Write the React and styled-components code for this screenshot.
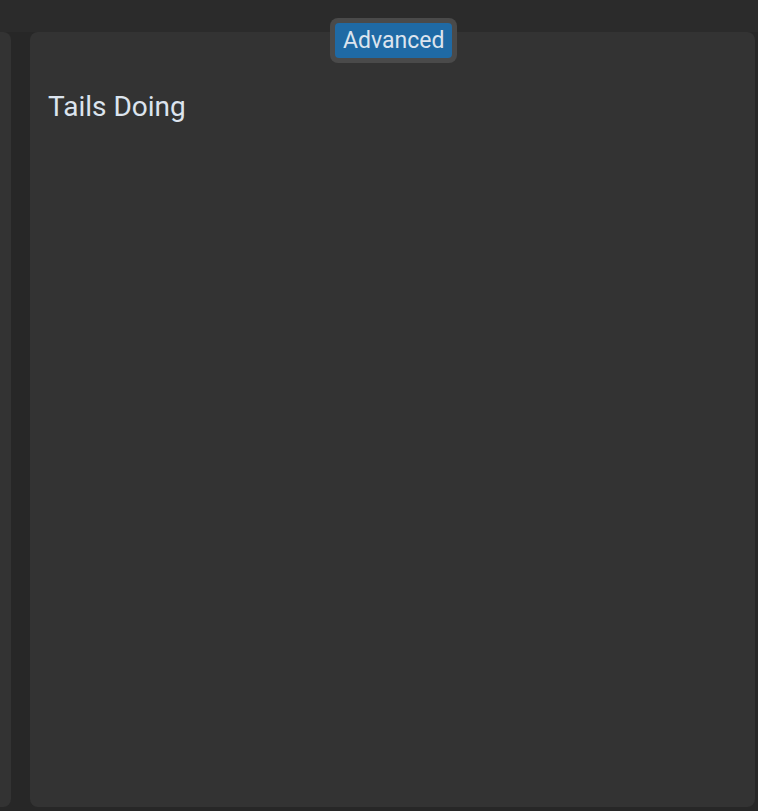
import React from 'react';
import styled, { createGlobalStyle } from 'styled-components';

const GlobalStyle = createGlobalStyle`
  html, body {
    margin: 0;
    padding: 0;
    background: #2b2b2b;
    font-family: Roboto, "Liberation Sans", sans-serif;
  }
  #root {
    height: 811px;
  }
`;

const Window = styled.div`
  position: relative;
  height: 811px;
  padding-top: 32px;
  box-sizing: border-box;
  display: flex;
  flex-direction: column;
`;

const Body = styled.div`
  flex: 1;
  display: flex;
  gap: 19px;
  background: #272727;
  padding-bottom: 4px;
  padding-right: 3px;
`;

const SidePanel = styled.div`
  width: 11px;
  background: #333333;
  border-radius: 0 8px 8px 0;
`;

const TabPanel = styled.div`
  position: relative;
  flex: 1;
  background: #333333;
  border-radius: 8px;
  padding: 58px 18px 0;
`;

const Segmented = styled.div`
  position: absolute;
  top: -14px;
  left: 300px;
  padding: 5px;
  background: #4a4a4a;
  border-radius: 8px;
  display: flex;
`;

const SegmentButton = styled.button`
  border: none;
  margin: 0;
  padding: 0 8px;
  height: 35px;
  border-radius: 4px;
  background: ${p => (p.$active ? '#1f6aa5' : '#4a4a4a')};
  color: #dce4ee;
  font-family: Roboto, "Liberation Sans", sans-serif;
  font-size: 23px;
  line-height: 35px;
  cursor: pointer;
`;

const Title = styled.div`
  color: #dce4ee;
  font-size: 28px;
  line-height: 34px;
`;

export default function App() {
  return (
    <>
      <GlobalStyle />
      <Window>
        <Body>
          <SidePanel />
          <TabPanel>
            <Segmented>
              <SegmentButton $active>Advanced</SegmentButton>
            </Segmented>
            <Title>Tails Doing</Title>
          </TabPanel>
        </Body>
      </Window>
    </>
  );
}
